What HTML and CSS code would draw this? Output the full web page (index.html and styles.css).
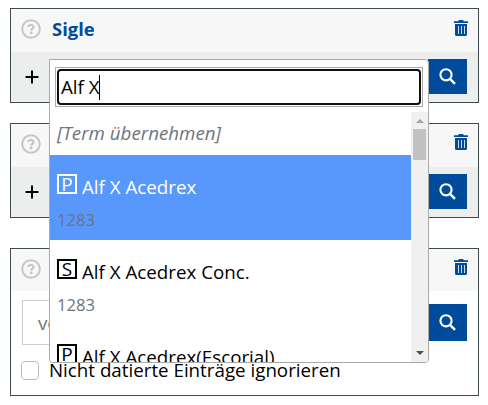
FILE: index.html
```html
<!DOCTYPE html>
<html lang="de">
<head>
<meta charset="utf-8">
<title>Suche</title>
<link rel="stylesheet" href="styles.css">
</head>
<body>
<svg class="symbols" width="0" height="0">
  <symbol id="help" viewBox="0 0 20 20"><circle cx="10" cy="10" r="8.8" fill="none" stroke="currentColor" stroke-width="1.9"/><path d="M7.3 8C7.5 5.3 12.6 5.3 12.6 8.1C12.6 9.8 10.1 9.7 10.1 11.6" fill="none" stroke="currentColor" stroke-width="2.2"/><circle cx="10.1" cy="14" r="1.4" fill="currentColor"/></symbol>
  <symbol id="trash" viewBox="0 0 14 16"><path d="M0 1.2H4.2L5 0H9L9.8 1.2H14V3H0ZM1 4H13V14.4Q13 16 11.4 16H2.6Q1 16 1 14.4Z" fill="currentColor"/><path d="M4.5 6V14M7.5 6V14M10.5 6V14" stroke="#d5d9df" stroke-width="1"/></symbol>
  <symbol id="search" viewBox="0 0 17 17"><circle cx="7" cy="6.8" r="5.6" fill="none" stroke="currentColor" stroke-width="2.1"/><path d="M11 10.8L16 15.8" stroke="currentColor" stroke-width="2.5"/></symbol>
  <symbol id="plus" viewBox="0 0 14 14"><path d="M7 .5V13.5M.5 7H13.5" stroke="currentColor" stroke-width="2"/></symbol>
</svg>
<main>
  <section class="card">
    <header><svg class="help"><use href="#help"/></svg><h2>Sigle</h2><svg class="trash"><use href="#trash"/></svg></header>
    <div class="row"><svg class="plus"><use href="#plus"/></svg><button class="go"><svg><use href="#search"/></svg></button></div>
  </section>
  <section class="card second">
    <header><svg class="help"><use href="#help"/></svg><svg class="trash"><use href="#trash"/></svg></header>
    <div class="row"><svg class="plus"><use href="#plus"/></svg><button class="go"><svg><use href="#search"/></svg></button></div>
  </section>
  <section class="card dates">
    <header><svg class="help"><use href="#help"/></svg><svg class="trash"><use href="#trash"/></svg></header>
    <div class="range"><div class="from">von</div><button class="go"><svg><use href="#search"/></svg></button></div>
    <div class="check"><span class="box"></span><span>Nicht datierte Einträge ignorieren</span></div>
  </section>
</main>
<div class="dropdown">
  <div class="search"><div class="field">Alf X<span class="caret"></span></div></div>
  <div class="results">
    <div class="list">
      <div class="term">[Term übernehmen]</div>
      <div class="item active"><div class="name"><span class="kind">P</span>Alf X Acedrex</div><div class="year">1283</div></div>
      <div class="item"><div class="name"><span class="kind">S</span>Alf X Acedrex Conc.</div><div class="year">1283</div></div>
      <div class="item"><div class="name"><span class="kind">P</span>Alf X Acedrex(Escorial)</div></div>
    </div>
    <div class="scrollbar"><span class="up"></span><span class="thumb"></span><span class="down"></span></div>
  </div>
</div>
</body>
</html>
```
FILE: styles.css
```css
* { box-sizing: border-box; }
body { margin: 0; width: 488px; height: 405px; overflow: hidden; background: #fff; color: #000; font: 18.76px/26px "Open Sans", "Noto Sans", sans-serif; }
.symbols { position: absolute; }
svg { display: block; flex: none; }
main { padding: 8px 9px 0 10px; }
.card { height: 95px; border: 1px solid #3f4c4d; background: #eceeed; }
.second { margin-top: 20px; }
.dates { height: 148px; margin-top: 30px; background: #fff; }
.card header { display: flex; height: 43px; padding: 10px 10px 0 10px; align-items: flex-start; background: #f7f7f7; }
.dates header { height: 42px; }
.help { width: 20px; height: 20px; color: #c6c6c6; }
h2 { margin: -3px 0 0 11px; font-size: 18.4px; line-height: 26px; color: #004b9b; }
.trash { width: 14px; height: 16px; margin: 1px 0 0 auto; color: #004b9b; }
.second .trash, .dates .trash { margin-top: 0; }
.row { display: flex; height: 50px; padding: 7px 11px 8px 14px; align-items: center; }
.plus { width: 14px; height: 14px; }
.go { display: flex; width: 39px; height: 35px; margin: 0 0 0 auto; padding: 0; border: 0; align-items: center; justify-content: center; background: #004b9b; color: #fff; }
.go svg { width: 17px; height: 17px; }
.range { display: flex; height: 45px; margin-top: 9px; padding: 0 11px; align-items: center; }
.range .go { height: 37px; }
.from { width: 150px; height: 45px; padding: 9px 15px; border: 1px solid #cbcfd5; color: #6c757d; }
.check { display: flex; height: 26px; margin-top: 12px; padding-left: 10px; align-items: center; }
.box { width: 18px; height: 19px; margin-right: 10px; border: 1px solid #bbb; border-radius: 4px; }
.dropdown { position: absolute; left: 49px; top: 59px; width: 380px; height: 304px; padding: 7px 0 0; overflow: hidden; border: 1px solid #aaa; border-radius: 0 4px 4px 4px; background: #fff; }
.search { width: 368px; height: 40px; margin-left: 5px; padding: 1px; border: 1px solid #aaa; }
.field { display: flex; height: 36px; padding-left: 2px; align-items: center; border: 2px solid #101010; border-radius: 4px; }
.caret { width: 1px; height: 25px; margin-left: -1px; background: #000; }
.results { display: flex; height: 250px; margin-top: 5px; overflow: hidden; }
.list { width: 361px; overflow: hidden; }
.term { height: 43px; padding: 8px 7px; color: #6c757d; font-style: italic; }
.item { height: 85px; padding: 17px 7px 0; }
.active { background: #5897fb; color: #fff; }
.name { display: flex; height: 30px; line-height: 30px; }
.kind { width: 20px; height: 20px; margin: 2px 5px 0 0; border: 2px solid currentColor; font-size: 19px; line-height: 16px; text-align: center; }
.year { height: 24px; margin-top: 6px; color: #6c757d; font-size: 16.6px; line-height: 24px; }
.scrollbar { display: flex; width: 17px; flex-direction: column; align-items: center; background: #f0f0f0; }
.up { margin-top: 7px; border: 4px solid transparent; border-top: 0; border-bottom-color: #a3a3a3; }
.thumb { width: 13px; height: 31px; margin-top: 6px; background: #c1c1c1; }
.down { margin: auto 0 7px; border: 4px solid transparent; border-bottom: 0; border-top-color: #505050; }
```
